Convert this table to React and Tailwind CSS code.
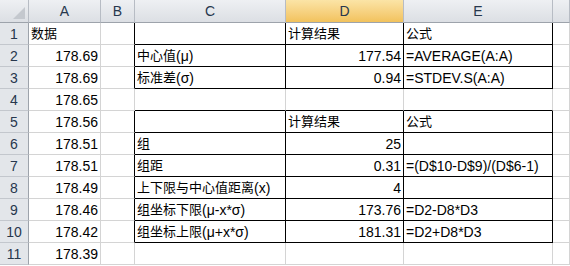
import React from 'react';

// Excel-style sheet: columns A–F, rows 1–11, two bordered blocks in C:E
const columns = ['A', 'B', 'C', 'D', 'E', ''];

const rows = [
  [{ t: '数据' }, null, null, { t: '计算结果' }, { t: '公式' }],
  [{ t: '178.69', n: true }, null, { t: '中心值(μ)' }, { t: '177.54', n: true }, { t: '=AVERAGE(A:A)' }],
  [{ t: '178.69', n: true }, null, { t: '标准差(σ)' }, { t: '0.94', n: true }, { t: '=STDEV.S(A:A)' }],
  [{ t: '178.65', n: true }, null, null, null, null],
  [{ t: '178.56', n: true }, null, null, { t: '计算结果' }, { t: '公式' }],
  [{ t: '178.51', n: true }, null, { t: '组' }, { t: '25', n: true }, null],
  [{ t: '178.51', n: true }, null, { t: '组距' }, { t: '0.31', n: true }, { t: '=(D$10-D$9)/(D$6-1)' }],
  [{ t: '178.49', n: true }, null, { t: '上下限与中心值距离(x)' }, { t: '4', n: true }, null],
  [{ t: '178.46', n: true }, null, { t: '组坐标下限(μ-x*σ)' }, { t: '173.76', n: true }, { t: '=D2-D8*D3' }],
  [{ t: '178.42', n: true }, null, { t: '组坐标上限(μ+x*σ)' }, { t: '181.31', n: true }, { t: '=D2+D8*D3' }],
  [{ t: '178.39', n: true }, null, null, null, null],
];

// rows (1-based) that sit inside one of the bordered blocks
const boxed = [1, 2, 3, 5, 6, 7, 8, 9, 10];

// han characters run a touch smaller than the latin text
function Runs({ text }) {
  const parts = text.split(/([\u4e00-\u9fff]+)/).filter(Boolean);
  return parts.map((p, i) =>
    /[\u4e00-\u9fff]/.test(p) ? (
      <span key={i} className="text-[13px]">{p}</span>
    ) : (
      <span key={i}>{p}</span>
    )
  );
}

function Corner() {
  return (
    <div className="relative border-r border-b border-r-[#b7bcc4] border-b-[#9da3ab] bg-gradient-to-b from-[#eef0f3] to-[#dcdfe4]">
      <svg className="absolute right-[2px] bottom-[2px]" width="14" height="14" viewBox="0 0 14 14">
        <polygon points="13,1 13,13 1,13" fill="#c4c8ce" />
      </svg>
    </div>
  );
}

function ColHeader({ label, active }) {
  return (
    <div
      className={`flex items-center justify-center border-r border-b border-r-[#b7bcc4] border-b-[#9da3ab] text-[14px] text-[#27374d] ${
        active ? 'bg-gradient-to-b from-[#fbe4a6] to-[#f2c25c]' : 'bg-gradient-to-b from-[#eef0f3] to-[#dcdfe4]'
      }`}
    >
      {label}
    </div>
  );
}

function Cell({ cell, col, row }) {
  const inBox = boxed.includes(row);
  // right edge: B borders the block on its left, C..E carry the block lines
  const rightBlack = inBox && col >= 1 && col <= 4;
  // bottom edge: rows 1..10 of C..E (row 4 closes over the second block's top)
  const bottomBlack = row <= 10 && col >= 2 && col <= 4;
  return (
    <div
      className={`flex items-end overflow-hidden whitespace-nowrap px-[2px] pb-[2px] border-r border-b ${
        rightBlack ? 'border-r-black' : 'border-r-[#d4d4d4]'
      } ${bottomBlack ? 'border-b-black' : 'border-b-[#d4d4d4]'} ${
        cell && cell.n ? 'justify-end' : 'justify-start'
      }`}
    >
      {cell ? <Runs text={cell.t} /> : ''}
    </div>
  );
}

export default function App() {
  return (
    <div
      className="w-[570px] h-[266px] overflow-hidden bg-white text-[14px] leading-[16px] text-black"
      style={{ fontFamily: '"Liberation Sans", "Noto Sans CJK SC", sans-serif' }}
    >
      <div className="grid grid-cols-[29px_72px_34px_151px_118px_149px_1fr] grid-rows-[23px_repeat(11,22px)]">
        <Corner />
        {columns.map((c) => (
          <ColHeader key={c || 'F'} label={c} active={c === 'D'} />
        ))}
        {rows.map((r, i) => (
          <React.Fragment key={i}>
            <div className="flex items-center justify-center border-r border-b border-r-[#9da3ab] border-b-[#c3c7cd] bg-[#e3e6ea] text-[14px] text-[#27374d]">
              {i + 1}
            </div>
            {[0, 1, 2, 3, 4, 5].map((c) => (
              <Cell key={c} cell={r[c]} col={c} row={i + 1} />
            ))}
          </React.Fragment>
        ))}
      </div>
    </div>
  );
}
